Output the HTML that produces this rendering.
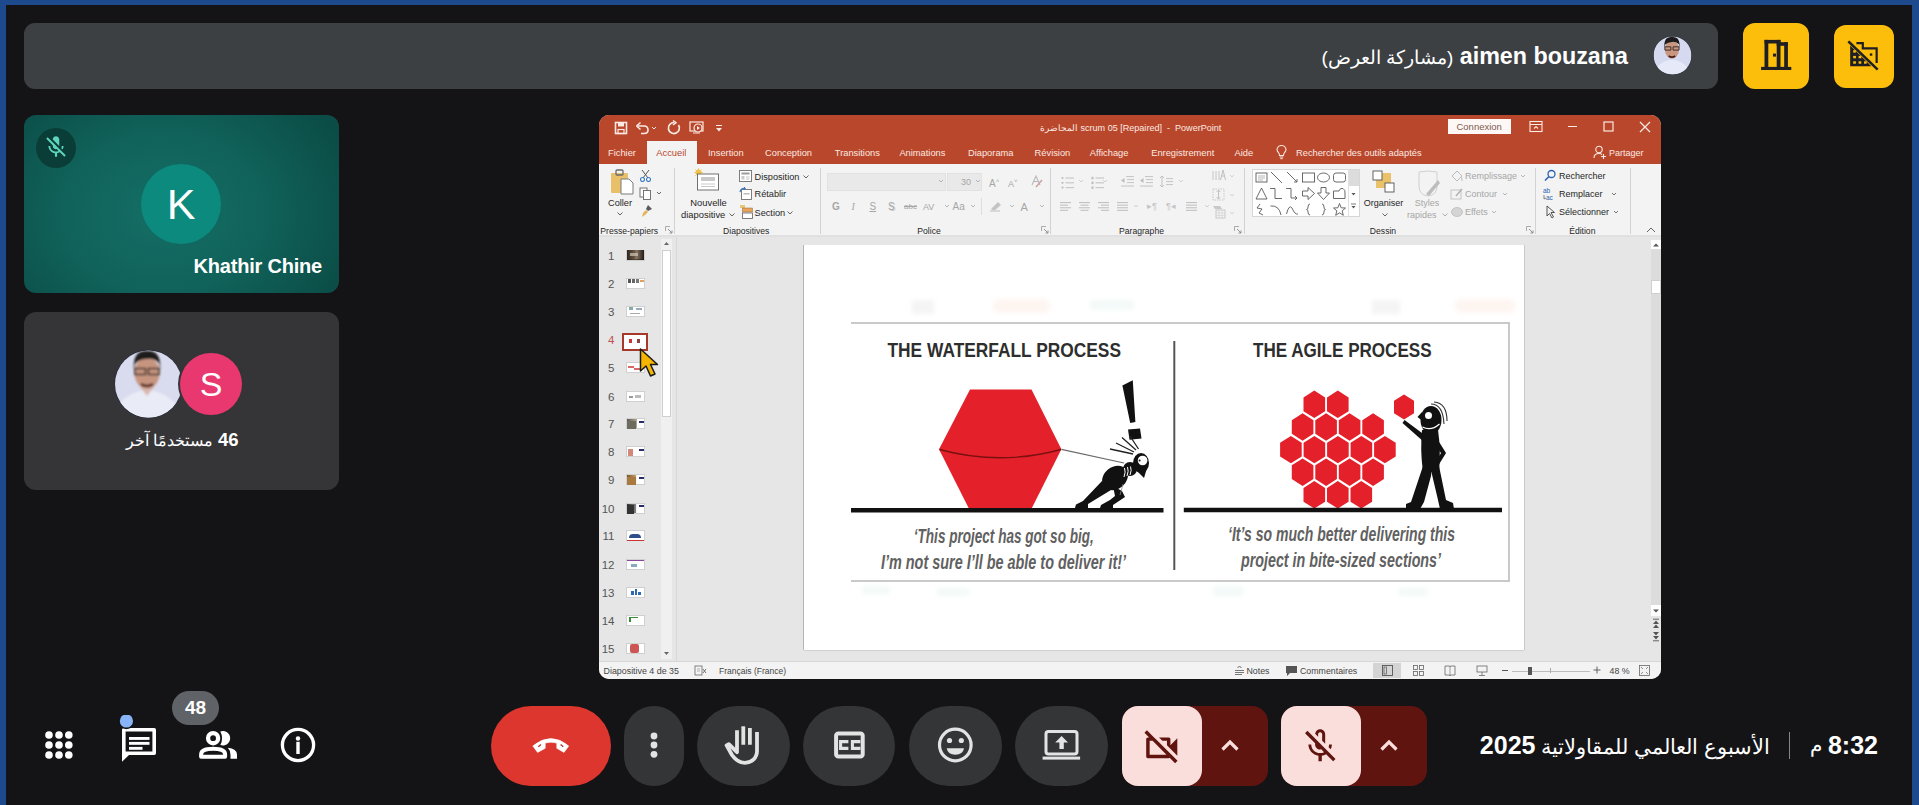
<!DOCTYPE html>
<html><head><meta charset="utf-8">
<style>
*{margin:0;padding:0;box-sizing:border-box}
html,body{width:1919px;height:805px;overflow:hidden;background:#141416;font-family:"Liberation Sans",sans-serif}
.a{position:absolute}
#frameT{left:0;top:0;width:1919px;height:5px;background:#1d4a8d}
#frameL{left:0;top:0;width:6px;height:805px;background:#1d4a8d}
#frameR{left:1912px;top:0;width:7px;height:805px;background:#1d4a8d}
#topbar{left:24px;top:23px;width:1694px;height:66px;background:#3c4043;border-radius:11px}
.yb{background:#fcbd0b;border-radius:12px}
#tile1{left:24px;top:115px;width:315px;height:178px;border-radius:12px;background:radial-gradient(ellipse 64% 90% at 44% 55%,#146e65 0%,#10625a 50%,#0b4c46 100%)}
#tile2{left:24px;top:312px;width:315px;height:178px;border-radius:12px;background:#353537}
.cb{background:#333537;border-radius:40px}
#ppt{left:599px;top:115px;width:1062px;height:564px;border-radius:10px;overflow:hidden;background:#e6e6e6}
.t{white-space:nowrap}
#ppt svg text{white-space:pre}
</style></head><body>
<div class="a" id="frameT"></div><div class="a" id="frameL"></div><div class="a" id="frameR"></div>

<!-- top bar -->
<div class="a" id="topbar"></div>
<div class="a yb" style="left:1743px;top:23px;width:66px;height:66px"></div>
<div class="a yb" style="left:1834px;top:25px;width:60px;height:63px"></div>

<!-- tiles -->
<div class="a" id="tile1"></div>
<div class="a" id="tile2"></div>

<!-- ppt -->
<div class="a" id="ppt">
<div class="a" style="left:0.0px;top:0.0px;width:1062.0px;height:49.0px;background:#b9472b"></div>
<svg class="a" style="left:15.0px;top:6.0px" width="14" height="14" viewBox="0 0 14 14"><rect x="1.5" y="1.5" width="11" height="11" fill="none" stroke="#fbe9e3" stroke-width="1.6"/><rect x="4" y="1.5" width="6" height="4" fill="#fbe9e3"/><rect x="4" y="8.5" width="6" height="4" fill="none" stroke="#fbe9e3" stroke-width="1.2"/></svg>
<svg class="a" style="left:36.0px;top:5.0px" width="24" height="16" viewBox="0 0 24 16"><path d="M3 6 H9 Q13 6 13 10 Q13 13.5 9 13.5 H6" fill="none" stroke="#fbe9e3" stroke-width="1.6"/><path d="M1.5 6 L5.5 2.5 M1.5 6 L5.5 9.5" stroke="#fbe9e3" stroke-width="1.6"/><path d="M17 7 L19 9 L21 7" fill="none" stroke="#fbe9e3" stroke-width="1"/></svg>
<svg class="a" style="left:67.0px;top:5.0px" width="16" height="16" viewBox="0 0 16 16"><path d="M12.5 5 A5.5 5.5 0 1 1 8 2.5" fill="none" stroke="#fbe9e3" stroke-width="1.7"/><path d="M7 0.5 L10 2.7 L7 5" fill="none" stroke="#fbe9e3" stroke-width="1.5"/></svg>
<svg class="a" style="left:90.0px;top:5.0px" width="16" height="16" viewBox="0 0 16 16"><rect x="1" y="2" width="13" height="9" fill="none" stroke="#fbe9e3" stroke-width="1.2"/><circle cx="9" cy="8" r="4" fill="#b9472b" stroke="#fbe9e3" stroke-width="1.2"/><path d="M8 6 L11 8 L8 10Z" fill="#fbe9e3"/><path d="M4 13 H11" stroke="#fbe9e3" stroke-width="1"/></svg>
<svg class="a" style="left:115.0px;top:8.0px" width="10" height="10" viewBox="0 0 10 10"><path d="M2 2.5 H8" stroke="#fbe9e3" stroke-width="1"/><path d="M2 5 L5 8.5 L8 5Z" fill="#fbe9e3"/></svg>
<div class="a t" style="left:441.0px;top:8.8px;font-size:9.05px;line-height:9.05px;color:#fbe9e3;">المحاضرة scrum 05 [Repaired]&nbsp; -&nbsp; PowerPoint</div>
<div class="a" style="left:849.0px;top:3.8px;width:62.5px;height:15.4px;background:#fdf7f5"></div>
<div class="a t" style="left:730.2px;width:300px;text-align:center;top:7.1px;font-size:9.5px;line-height:9.5px;color:#7d5b50;">Connexion</div>
<svg class="a" style="left:930.0px;top:5.0px" width="14" height="13" viewBox="0 0 14 13"><rect x="1" y="1.5" width="12" height="10" fill="none" stroke="#fbe9e3" stroke-width="1.1"/><path d="M1 4.5 H13" stroke="#fbe9e3" stroke-width="1.1"/><path d="M5 8.5 L7 6.5 L9 8.5" fill="none" stroke="#fbe9e3" stroke-width="1.1"/></svg>
<div class="a" style="left:968.5px;top:11.0px;width:9.0px;height:1.2px;background:#fbe9e3"></div>
<svg class="a" style="left:1004.0px;top:6.0px" width="11" height="11" viewBox="0 0 11 11"><rect x="1" y="1" width="9" height="9" fill="none" stroke="#fbe9e3" stroke-width="1.2"/></svg>
<svg class="a" style="left:1039.5px;top:5.5px" width="12" height="12" viewBox="0 0 12 12"><path d="M1 1 L11 11 M11 1 L1 11" stroke="#fbe9e3" stroke-width="1.3"/></svg>
<div class="a" style="left:48.0px;top:26.0px;width:50.0px;height:24.0px;background:#f3f3f3"></div>
<div class="a t" style="left:9.0px;top:33.7px;font-size:9.3px;line-height:9.3px;color:#fbe9e3;">Fichier</div>
<div class="a t" style="left:57.3px;top:33.7px;font-size:9.3px;line-height:9.3px;color:#b9472b;">Accueil</div>
<div class="a t" style="left:109.0px;top:33.7px;font-size:9.3px;line-height:9.3px;color:#fbe9e3;">Insertion</div>
<div class="a t" style="left:166.0px;top:33.7px;font-size:9.3px;line-height:9.3px;color:#fbe9e3;">Conception</div>
<div class="a t" style="left:235.8px;top:33.7px;font-size:9.3px;line-height:9.3px;color:#fbe9e3;">Transitions</div>
<div class="a t" style="left:300.4px;top:33.7px;font-size:9.3px;line-height:9.3px;color:#fbe9e3;">Animations</div>
<div class="a t" style="left:369.0px;top:33.7px;font-size:9.3px;line-height:9.3px;color:#fbe9e3;">Diaporama</div>
<div class="a t" style="left:435.6px;top:33.7px;font-size:9.3px;line-height:9.3px;color:#fbe9e3;">Révision</div>
<div class="a t" style="left:490.8px;top:33.7px;font-size:9.3px;line-height:9.3px;color:#fbe9e3;">Affichage</div>
<div class="a t" style="left:552.2px;top:33.7px;font-size:9.3px;line-height:9.3px;color:#fbe9e3;">Enregistrement</div>
<div class="a t" style="left:635.5px;top:33.7px;font-size:9.3px;line-height:9.3px;color:#fbe9e3;">Aide</div>
<div class="a t" style="left:697.0px;top:33.7px;font-size:9.3px;line-height:9.3px;color:#fbe9e3;">Rechercher des outils adaptés</div>
<svg class="a" style="left:677.0px;top:29.0px" width="11" height="16" viewBox="0 0 11 16"><path d="M5.5 1.5 A4 4 0 0 1 8.5 8.5 Q7.5 10 7.5 11.5 H3.5 Q3.5 10 2.5 8.5 A4 4 0 0 1 5.5 1.5Z" fill="none" stroke="#fbe9e3" stroke-width="1.1"/><path d="M3.7 13 H7.3 M4.3 14.7 H6.7" stroke="#fbe9e3" stroke-width="1"/></svg>
<svg class="a" style="left:994.0px;top:30.0px" width="14" height="14" viewBox="0 0 14 14"><circle cx="6" cy="4.5" r="3.2" fill="none" stroke="#fbe9e3" stroke-width="1.1"/><path d="M1 13 Q1 8.5 6 8.5 Q8 8.5 9 9.5" fill="none" stroke="#fbe9e3" stroke-width="1.1"/><path d="M10.5 9 V14 M8 11.5 H13" stroke="#fbe9e3" stroke-width="1.1"/></svg>
<div class="a t" style="left:1010.0px;top:33.8px;font-size:9px;line-height:9px;color:#fbe9e3;">Partager</div>
<div class="a" style="left:0.0px;top:49.0px;width:1062.0px;height:72.0px;background:#f3f3f3"></div>
<div class="a" style="left:0.0px;top:120.0px;width:1062.0px;height:2.0px;background:#e0e0e0"></div>
<div class="a" style="left:74.6px;top:53.0px;width:1.0px;height:66.0px;background:#d2d2d2"></div>
<div class="a" style="left:221.0px;top:53.0px;width:1.0px;height:66.0px;background:#d2d2d2"></div>
<div class="a" style="left:450.8px;top:53.0px;width:1.0px;height:66.0px;background:#d2d2d2"></div>
<div class="a" style="left:644.8px;top:53.0px;width:1.0px;height:66.0px;background:#d2d2d2"></div>
<div class="a" style="left:936.2px;top:53.0px;width:1.0px;height:66.0px;background:#d2d2d2"></div>
<div class="a" style="left:1030.8px;top:53.0px;width:1.0px;height:66.0px;background:#d2d2d2"></div>
<div class="a t" style="left:-119.8px;width:300px;text-align:center;top:111.8px;font-size:8.6px;line-height:8.6px;color:#262626;">Presse-papiers</div>
<div class="a t" style="left:-2.8px;width:300px;text-align:center;top:111.8px;font-size:8.6px;line-height:8.6px;color:#262626;">Diapositives</div>
<div class="a t" style="left:180.0px;width:300px;text-align:center;top:111.8px;font-size:8.6px;line-height:8.6px;color:#262626;">Police</div>
<div class="a t" style="left:392.5px;width:300px;text-align:center;top:111.8px;font-size:8.6px;line-height:8.6px;color:#262626;">Paragraphe</div>
<div class="a t" style="left:634.0px;width:300px;text-align:center;top:111.8px;font-size:8.6px;line-height:8.6px;color:#262626;">Dessin</div>
<div class="a t" style="left:833.3px;width:300px;text-align:center;top:111.8px;font-size:8.6px;line-height:8.6px;color:#262626;">Édition</div>
<svg class="a" style="left:66.0px;top:111.0px" width="8" height="8" viewBox="0 0 8 8"><path d="M0.5 0.5 H5 M0.5 0.5 V5" stroke="#999" stroke-width="0.8" fill="none"/><path d="M3 3 L7 7 M7 4.5 V7 H4.5" stroke="#888" stroke-width="0.9" fill="none"/></svg>
<svg class="a" style="left:442.0px;top:111.0px" width="8" height="8" viewBox="0 0 8 8"><path d="M0.5 0.5 H5 M0.5 0.5 V5" stroke="#999" stroke-width="0.8" fill="none"/><path d="M3 3 L7 7 M7 4.5 V7 H4.5" stroke="#888" stroke-width="0.9" fill="none"/></svg>
<svg class="a" style="left:635.0px;top:111.0px" width="8" height="8" viewBox="0 0 8 8"><path d="M0.5 0.5 H5 M0.5 0.5 V5" stroke="#999" stroke-width="0.8" fill="none"/><path d="M3 3 L7 7 M7 4.5 V7 H4.5" stroke="#888" stroke-width="0.9" fill="none"/></svg>
<svg class="a" style="left:927.0px;top:111.0px" width="8" height="8" viewBox="0 0 8 8"><path d="M0.5 0.5 H5 M0.5 0.5 V5" stroke="#999" stroke-width="0.8" fill="none"/><path d="M3 3 L7 7 M7 4.5 V7 H4.5" stroke="#888" stroke-width="0.9" fill="none"/></svg>
<svg class="a" style="left:10.0px;top:53.0px" width="26" height="28" viewBox="0 0 26 28"><rect x="2" y="5" width="17" height="20" rx="1" fill="#e8c06a"/><rect x="7" y="2" width="7" height="5" rx="1" fill="none" stroke="#6b6b6b" stroke-width="1.3"/><path d="M12 11 H20 L24 15 V26 H12Z" fill="#fff" stroke="#7a7a7a" stroke-width="1"/></svg>
<div class="a t" style="left:9.0px;top:83.8px;font-size:9.2px;line-height:9.2px;color:#262626;">Coller</div>
<svg class="a" style="left:17.0px;top:96.0px" width="8" height="6" viewBox="0 0 8 6"><path d="M1.5 1.5 L4 4 L6.5 1.5" fill="none" stroke="#555" stroke-width="0.9"/></svg>
<svg class="a" style="left:40.0px;top:54.0px" width="13" height="13" viewBox="0 0 13 13"><path d="M3 1 L9 9 M10 1 L4 9" stroke="#555" stroke-width="1"/><circle cx="3.5" cy="10.5" r="2" fill="none" stroke="#3a78c2" stroke-width="1.1"/><circle cx="9.5" cy="10.5" r="2" fill="none" stroke="#3a78c2" stroke-width="1.1"/></svg>
<svg class="a" style="left:40.0px;top:72.0px" width="24" height="13" viewBox="0 0 24 13"><rect x="1" y="1" width="7" height="9" fill="#fff" stroke="#666" stroke-width="0.9"/><rect x="4.5" y="3.5" width="7" height="9" fill="#fff" stroke="#666" stroke-width="0.9"/><path d="M18 5 L20 7 L22 5" fill="none" stroke="#555" stroke-width="0.9"/></svg>
<svg class="a" style="left:41.0px;top:89.0px" width="13" height="14" viewBox="0 0 13 14"><path d="M8 1 L12 5 L8 7 L6 5Z" fill="#5a5a5a"/><path d="M2 13 L3 9 L6 6 L8 8 L5 11Z" fill="#e2b55a"/></svg>
<svg class="a" style="left:95.0px;top:53.0px" width="28" height="24" viewBox="0 0 28 24"><circle cx="4.5" cy="4.5" r="3" fill="#f0c24a"/><path d="M4.5 0 V9 M0 4.5 H9 M1.3 1.3 L7.7 7.7 M7.7 1.3 L1.3 7.7" stroke="#f0c24a" stroke-width="0.8"/><rect x="3.5" y="6" width="21" height="16" fill="#fff" stroke="#707070" stroke-width="1"/><rect x="7" y="9" width="14" height="4" fill="#c8c8c8"/><path d="M7 16 H21 M7 18.5 H21" stroke="#bbb" stroke-width="0.8"/></svg>
<div class="a t" style="left:-40.5px;width:300px;text-align:center;top:82.5px;font-size:9.4px;line-height:9.4px;color:#262626;">Nouvelle</div>
<div class="a t" style="left:82.0px;top:95.3px;font-size:9.4px;line-height:9.4px;color:#262626;">diapositive</div>
<svg class="a" style="left:129.0px;top:97.0px" width="8" height="6" viewBox="0 0 8 6"><path d="M1.5 1.5 L4 4 L6.5 1.5" fill="none" stroke="#555" stroke-width="0.9"/></svg>
<svg class="a" style="left:140.0px;top:55.0px" width="13" height="12" viewBox="0 0 13 12"><rect x="0.5" y="0.5" width="12" height="11" fill="#fff" stroke="#707070" stroke-width="0.9"/><rect x="2.5" y="2.5" width="8" height="2" fill="#9c9c9c"/><rect x="2.5" y="6" width="3" height="3.5" fill="#c9c9c9"/><path d="M7 7 H10.5 M7 9 H10.5" stroke="#aaa" stroke-width="0.7"/></svg>
<div class="a t" style="left:155.5px;top:57.6px;font-size:9.2px;line-height:9.2px;color:#262626;">Disposition</div>
<svg class="a" style="left:203.0px;top:59.0px" width="8" height="6" viewBox="0 0 8 6"><path d="M1.5 1.5 L4 4 L6.5 1.5" fill="none" stroke="#555" stroke-width="0.9"/></svg>
<svg class="a" style="left:140.0px;top:72.0px" width="13" height="13" viewBox="0 0 13 13"><rect x="2.5" y="2.5" width="10" height="10" fill="#fff" stroke="#707070" stroke-width="0.9"/><path d="M1 5 Q2 1 6 1.5" fill="none" stroke="#3a78c2" stroke-width="1.2"/><path d="M5 0 L6.5 1.5 L5 3" fill="none" stroke="#3a78c2" stroke-width="1"/><rect x="4.5" y="6" width="6" height="1.5" fill="#bbb"/></svg>
<div class="a t" style="left:155.5px;top:75.2px;font-size:9.2px;line-height:9.2px;color:#262626;">Rétablir</div>
<svg class="a" style="left:141.0px;top:90.0px" width="13" height="14" viewBox="0 0 13 14"><rect x="0" y="0" width="5" height="3" fill="#e9c77a"/><rect x="2.5" y="3" width="10" height="4" fill="#e9a35a" stroke="#8a6a40" stroke-width="0.5"/><rect x="2.5" y="8" width="10" height="5.5" fill="#fff" stroke="#707070" stroke-width="0.9"/></svg>
<div class="a t" style="left:155.5px;top:93.5px;font-size:9.2px;line-height:9.2px;color:#262626;">Section</div>
<svg class="a" style="left:187.0px;top:95.0px" width="8" height="6" viewBox="0 0 8 6"><path d="M1.5 1.5 L4 4 L6.5 1.5" fill="none" stroke="#555" stroke-width="0.9"/></svg>
<div class="a" style="left:228.0px;top:57.7px;width:118.7px;height:18.7px;background:#e9e9e9;border:1px solid #e2e2e2"></div>
<div class="a" style="left:347.8px;top:57.7px;width:35.7px;height:18.7px;background:#e9e9e9;border:1px solid #e2e2e2"></div>
<div class="a t" style="left:362.0px;top:63.3px;font-size:9px;line-height:9px;color:#a6a6a6;">30</div>
<svg class="a" style="left:339.0px;top:64.0px" width="6" height="5" viewBox="0 0 6 5"><path d="M1 1 L3 3 L5 1" fill="none" stroke="#a6a6a6" stroke-width="0.8"/></svg>
<svg class="a" style="left:376.0px;top:64.0px" width="6" height="5" viewBox="0 0 6 5"><path d="M1 1 L3 3 L5 1" fill="none" stroke="#a6a6a6" stroke-width="0.8"/></svg>
<div class="a t" style="left:390.0px;top:61.3px;font-size:10px;line-height:10px;color:#a6a6a6;">A<sup style="font-size:6px">˄</sup></div>
<div class="a t" style="left:409.0px;top:62.3px;font-size:9px;line-height:9px;color:#a6a6a6;">A<sup style="font-size:6px">˅</sup></div>
<svg class="a" style="left:431.0px;top:59.0px" width="13" height="14" viewBox="0 0 13 14"><path d="M2 11 L6 2 L10 11 M3.5 7.5 H8.5" fill="none" stroke="#b8b8b8" stroke-width="1.1"/><path d="M6 13 L12 6" stroke="#c9a0a0" stroke-width="1.4"/></svg>
<div class="a t" style="left:233.0px;top:86.8px;font-size:10px;line-height:10px;color:#a6a6a6;font-weight:bold">G</div>
<div class="a t" style="left:252.5px;top:86.8px;font-size:10px;line-height:10px;color:#a6a6a6;font-style:italic;font-family:Liberation Serif">I</div>
<div class="a t" style="left:270.5px;top:86.8px;font-size:10px;line-height:10px;color:#a6a6a6;text-decoration:underline">S</div>
<div class="a t" style="left:289.0px;top:86.8px;font-size:10px;line-height:10px;color:#a6a6a6;text-shadow:1px 1px 0 #ccc">S</div>
<div class="a t" style="left:305.0px;top:86.8px;font-size:10px;line-height:10px;color:#a6a6a6;text-decoration:line-through;font-size:8px">abc</div>
<div class="a t" style="left:324.0px;top:86.8px;font-size:10px;line-height:10px;color:#a6a6a6;font-size:9px">AV</div>
<div class="a t" style="left:353.5px;top:86.8px;font-size:10px;line-height:10px;color:#a6a6a6;">Aa</div>
<div class="a t" style="left:421.5px;top:86.8px;font-size:10px;line-height:10px;color:#a6a6a6;font-size:11px">A</div>
<svg class="a" style="left:345.0px;top:89.0px" width="6" height="5" viewBox="0 0 6 5"><path d="M1 1 L3 3 L5 1" fill="none" stroke="#a6a6a6" stroke-width="0.8"/></svg>
<svg class="a" style="left:371.0px;top:89.0px" width="6" height="5" viewBox="0 0 6 5"><path d="M1 1 L3 3 L5 1" fill="none" stroke="#a6a6a6" stroke-width="0.8"/></svg>
<svg class="a" style="left:410.0px;top:89.0px" width="6" height="5" viewBox="0 0 6 5"><path d="M1 1 L3 3 L5 1" fill="none" stroke="#a6a6a6" stroke-width="0.8"/></svg>
<svg class="a" style="left:440.0px;top:89.0px" width="6" height="5" viewBox="0 0 6 5"><path d="M1 1 L3 3 L5 1" fill="none" stroke="#a6a6a6" stroke-width="0.8"/></svg>
<div class="a" style="left:382.0px;top:83.0px;width:1.0px;height:17.0px;background:#ddd"></div>
<svg class="a" style="left:389.0px;top:84.0px" width="16" height="13" viewBox="0 0 16 13"><path d="M3 10 L10 3 L13 6 L6 12Z" fill="#c4c4c4"/><path d="M2 12 H12" stroke="#d8d8d8" stroke-width="2"/></svg>
<svg class="a" style="left:461.5px;top:61.0px" width="14" height="14" viewBox="0 0 14 14"><circle cx="1.5" cy="2.0" r="1.1" fill="#bdbdbd"/><rect x="4.5" y="1.4" width="8.5" height="1.2" fill="#c8c8c8"/><circle cx="1.5" cy="6.8" r="1.1" fill="#bdbdbd"/><rect x="4.5" y="6.199999999999999" width="8.5" height="1.2" fill="#c8c8c8"/><circle cx="1.5" cy="11.6" r="1.1" fill="#bdbdbd"/><rect x="4.5" y="11.0" width="8.5" height="1.2" fill="#c8c8c8"/></svg>
<svg class="a" style="left:491.5px;top:61.0px" width="14" height="14" viewBox="0 0 14 14"><rect x="0.5" y="0.8" width="2" height="2.5" fill="#bdbdbd"/><rect x="4.5" y="1.4" width="8.5" height="1.2" fill="#c8c8c8"/><rect x="0.5" y="5.6" width="2" height="2.5" fill="#bdbdbd"/><rect x="4.5" y="6.199999999999999" width="8.5" height="1.2" fill="#c8c8c8"/><rect x="0.5" y="10.4" width="2" height="2.5" fill="#bdbdbd"/><rect x="4.5" y="11.0" width="8.5" height="1.2" fill="#c8c8c8"/></svg>
<svg class="a" style="left:521.5px;top:61.0px" width="14" height="14" viewBox="0 0 14 14"><rect x="5" y="0" width="8" height="1.1" fill="#c8c8c8"/><rect x="6" y="3" width="7" height="1.1" fill="#c8c8c8"/><rect x="6" y="6" width="7" height="1.1" fill="#c8c8c8"/><rect x="0" y="9.5" width="13" height="1.1" fill="#c8c8c8"/><path d="M0 4.5 L3.5 2 V7Z" fill="#bdbdbd"/></svg>
<svg class="a" style="left:541.0px;top:61.0px" width="14" height="14" viewBox="0 0 14 14"><rect x="5" y="0" width="8" height="1.1" fill="#c8c8c8"/><rect x="6" y="3" width="7" height="1.1" fill="#c8c8c8"/><rect x="6" y="6" width="7" height="1.1" fill="#c8c8c8"/><rect x="0" y="9.5" width="13" height="1.1" fill="#c8c8c8"/><path d="M0 4.5 L3.5 2 V7Z" fill="#bdbdbd"/></svg>
<svg class="a" style="left:561.0px;top:61.0px" width="14" height="14" viewBox="0 0 14 14"><path d="M2 0 V11 M0 2 L2 0 L4 2 M0 9 L2 11 L4 9" stroke="#bdbdbd" stroke-width="0.9" fill="none"/><rect x="6" y="2" width="7" height="1.1" fill="#c8c8c8"/><rect x="6" y="5" width="7" height="1.1" fill="#c8c8c8"/><rect x="6" y="8" width="7" height="1.1" fill="#c8c8c8"/></svg>
<svg class="a" style="left:460.5px;top:87.0px" width="14" height="14" viewBox="0 0 14 14"><rect x="0" y="0.0" width="11" height="1.1" fill="#c2c2c2"/><rect x="0" y="2.6" width="8" height="1.1" fill="#c2c2c2"/><rect x="0" y="5.2" width="11" height="1.1" fill="#c2c2c2"/><rect x="0" y="7.800000000000001" width="8" height="1.1" fill="#c2c2c2"/></svg>
<svg class="a" style="left:479.5px;top:87.0px" width="14" height="14" viewBox="0 0 14 14"><rect x="0.0" y="0.0" width="11" height="1.1" fill="#c2c2c2"/><rect x="1.5" y="2.6" width="8" height="1.1" fill="#c2c2c2"/><rect x="0.0" y="5.2" width="11" height="1.1" fill="#c2c2c2"/><rect x="1.5" y="7.800000000000001" width="8" height="1.1" fill="#c2c2c2"/></svg>
<svg class="a" style="left:498.5px;top:87.0px" width="14" height="14" viewBox="0 0 14 14"><rect x="0" y="0.0" width="11" height="1.1" fill="#c2c2c2"/><rect x="3" y="2.6" width="8" height="1.1" fill="#c2c2c2"/><rect x="0" y="5.2" width="11" height="1.1" fill="#c2c2c2"/><rect x="3" y="7.800000000000001" width="8" height="1.1" fill="#c2c2c2"/></svg>
<svg class="a" style="left:517.5px;top:87.0px" width="14" height="14" viewBox="0 0 14 14"><rect x="0" y="0.0" width="11" height="1.1" fill="#c2c2c2"/><rect x="0" y="2.6" width="11" height="1.1" fill="#c2c2c2"/><rect x="0" y="5.2" width="11" height="1.1" fill="#c2c2c2"/><rect x="0" y="7.800000000000001" width="11" height="1.1" fill="#c2c2c2"/></svg>
<svg class="a" style="left:479.0px;top:64.0px" width="6" height="5" viewBox="0 0 6 5"><path d="M1 1 L3 3 L5 1" fill="none" stroke="#c8c8c8" stroke-width="0.8"/></svg>
<svg class="a" style="left:503.0px;top:64.0px" width="6" height="5" viewBox="0 0 6 5"><path d="M1 1 L3 3 L5 1" fill="none" stroke="#c8c8c8" stroke-width="0.8"/></svg>
<svg class="a" style="left:579.0px;top:64.0px" width="6" height="5" viewBox="0 0 6 5"><path d="M1 1 L3 3 L5 1" fill="none" stroke="#c8c8c8" stroke-width="0.8"/></svg>
<svg class="a" style="left:534.0px;top:89.0px" width="6" height="5" viewBox="0 0 6 5"><path d="M1 1 L3 3 L5 1" fill="none" stroke="#c8c8c8" stroke-width="0.8"/></svg>
<svg class="a" style="left:605.0px;top:89.0px" width="6" height="5" viewBox="0 0 6 5"><path d="M1 1 L3 3 L5 1" fill="none" stroke="#c8c8c8" stroke-width="0.8"/></svg>
<div class="a t" style="left:548.0px;top:87.3px;font-size:9px;line-height:9px;color:#c4c4c4;">▸¶</div>
<div class="a t" style="left:567.0px;top:87.3px;font-size:9px;line-height:9px;color:#c4c4c4;">¶◂</div>
<svg class="a" style="left:587.0px;top:87.0px" width="14" height="14" viewBox="0 0 14 14"><rect x="0" y="0.0" width="11" height="1.1" fill="#c2c2c2"/><rect x="0" y="2.6" width="11" height="1.1" fill="#c2c2c2"/><rect x="0" y="5.2" width="11" height="1.1" fill="#c2c2c2"/><rect x="0" y="7.800000000000001" width="11" height="1.1" fill="#c2c2c2"/></svg>
<svg class="a" style="left:613.0px;top:53.0px" width="14" height="14" viewBox="0 0 14 14"><path d="M1 3 V12 M4 3 V12 M7 3 V12" stroke="#c6c6c6" stroke-width="1"/><path d="M8.5 12 L11 2 L13.5 12 M9.5 8 H12.5" stroke="#bdbdbd" stroke-width="1" fill="none"/></svg>
<svg class="a" style="left:613.0px;top:72.0px" width="14" height="14" viewBox="0 0 14 14"><rect x="1" y="2" width="11" height="11" fill="none" stroke="#c6c6c6" stroke-width="0.9" stroke-dasharray="1.5 1"/><path d="M6.5 3 V12 M4.5 5 L6.5 3 L8.5 5 M4.5 10 L6.5 12 L8.5 10" stroke="#bdbdbd" stroke-width="0.9" fill="none"/></svg>
<svg class="a" style="left:613.0px;top:90.0px" width="14" height="14" viewBox="0 0 14 14"><rect x="4" y="5" width="9" height="8" fill="none" stroke="#c6c6c6" stroke-width="0.9"/><path d="M4 8 H13 M4 10.5 H13 M7 5 V13 M10 5 V13" stroke="#d0d0d0" stroke-width="0.6"/><path d="M1 1 H8 L10 4 H3Z" fill="#c8c8c8"/></svg>
<svg class="a" style="left:630.0px;top:59.0px" width="6" height="5" viewBox="0 0 6 5"><path d="M1 1 L3 3 L5 1" fill="none" stroke="#c8c8c8" stroke-width="0.8"/></svg>
<svg class="a" style="left:630.0px;top:78.0px" width="6" height="5" viewBox="0 0 6 5"><path d="M1 1 L3 3 L5 1" fill="none" stroke="#c8c8c8" stroke-width="0.8"/></svg>
<svg class="a" style="left:630.0px;top:96.0px" width="6" height="5" viewBox="0 0 6 5"><path d="M1 1 L3 3 L5 1" fill="none" stroke="#c8c8c8" stroke-width="0.8"/></svg>
<div class="a" style="left:653.3px;top:54.2px;width:107.3px;height:48.1px;background:#fff;border:1px solid #d6d6d6"></div>
<div class="a" style="left:749.4px;top:55.2px;width:10.2px;height:16.0px;background:#dcdcdc"></div>
<div class="a" style="left:749.4px;top:54.2px;width:1.0px;height:48.0px;background:#e0e0e0"></div>
<svg class="a" style="left:655.5px;top:56.2px" width="13" height="13" viewBox="0 0 13 13"><rect x="1" y="2" width="11" height="9" fill="none" stroke="#5a5a5a" stroke-width="0.9"/><path d="M3 5 H10 M3 7 H10 M3 9 H8" stroke="#888" stroke-width="0.6"/></svg>
<svg class="a" style="left:671.3px;top:56.2px" width="13" height="13" viewBox="0 0 13 13"><path d="M1 1 L12 12" stroke="#5a5a5a" stroke-width="0.9"/></svg>
<svg class="a" style="left:686.9px;top:56.2px" width="13" height="13" viewBox="0 0 13 13"><path d="M1 1 L11 11 M8 11 H11 V8" stroke="#5a5a5a" stroke-width="0.9" fill="none"/></svg>
<svg class="a" style="left:702.5px;top:56.2px" width="13" height="13" viewBox="0 0 13 13"><rect x="0.5" y="2" width="12" height="9" fill="none" stroke="#5a5a5a" stroke-width="0.9"/></svg>
<svg class="a" style="left:717.8px;top:56.2px" width="13" height="13" viewBox="0 0 13 13"><ellipse cx="6.5" cy="6.5" rx="6" ry="4.5" fill="none" stroke="#5a5a5a" stroke-width="0.9"/></svg>
<svg class="a" style="left:733.8px;top:56.2px" width="13" height="13" viewBox="0 0 13 13"><rect x="0.5" y="2" width="12" height="9" rx="2.5" fill="none" stroke="#5a5a5a" stroke-width="0.9"/></svg>
<svg class="a" style="left:655.5px;top:71.8px" width="13" height="13" viewBox="0 0 13 13"><path d="M6.5 1 L12 12 H1Z" fill="none" stroke="#5a5a5a" stroke-width="0.9"/></svg>
<svg class="a" style="left:671.3px;top:71.8px" width="13" height="13" viewBox="0 0 13 13"><path d="M0 1.5 H5 V11.5 H12" fill="none" stroke="#5a5a5a" stroke-width="0.9"/></svg>
<svg class="a" style="left:686.9px;top:71.8px" width="13" height="13" viewBox="0 0 13 13"><path d="M0 1.5 H5 V11 H11 M9 9 L11 11 L9 13" fill="none" stroke="#5a5a5a" stroke-width="0.9"/></svg>
<svg class="a" style="left:702.5px;top:71.8px" width="13" height="13" viewBox="0 0 13 13"><path d="M0.5 4 H6 V0.5 L12.5 6.5 L6 12.5 V9 H0.5Z" fill="none" stroke="#5a5a5a" stroke-width="0.9"/></svg>
<svg class="a" style="left:717.8px;top:71.8px" width="13" height="13" viewBox="0 0 13 13"><path d="M4 0.5 H9 V6 H12.5 L6.5 12.5 L0.5 6 H4Z" fill="none" stroke="#5a5a5a" stroke-width="0.9"/></svg>
<svg class="a" style="left:733.8px;top:71.8px" width="13" height="13" viewBox="0 0 13 13"><path d="M0.5 4 H6 Q7 0.5 10 1.5 Q12.5 3 12 6 V11.5 H0.5Z" fill="none" stroke="#5a5a5a" stroke-width="0.9"/></svg>
<svg class="a" style="left:655.5px;top:87.5px" width="13" height="13" viewBox="0 0 13 13"><path d="M5 1 L2 5 L7 6 L4 10 L8 12" fill="none" stroke="#5a5a5a" stroke-width="0.9"/></svg>
<svg class="a" style="left:671.3px;top:87.5px" width="13" height="13" viewBox="0 0 13 13"><path d="M0.5 3 Q9 2 11 12" fill="none" stroke="#5a5a5a" stroke-width="0.9"/></svg>
<svg class="a" style="left:686.9px;top:87.5px" width="13" height="13" viewBox="0 0 13 13"><path d="M0.5 11 Q3 1 6 5 Q9 12 12 11" fill="none" stroke="#5a5a5a" stroke-width="0.9"/></svg>
<svg class="a" style="left:702.5px;top:87.5px" width="13" height="13" viewBox="0 0 13 13"><path d="M8 1 Q6 1 6 4 Q6 6.5 4.5 6.5 Q6 6.5 6 9 Q6 12 8 12" fill="none" stroke="#5a5a5a" stroke-width="0.9"/></svg>
<svg class="a" style="left:717.8px;top:87.5px" width="13" height="13" viewBox="0 0 13 13"><path d="M5 1 Q7 1 7 4 Q7 6.5 8.5 6.5 Q7 6.5 7 9 Q7 12 5 12" fill="none" stroke="#5a5a5a" stroke-width="0.9"/></svg>
<svg class="a" style="left:733.8px;top:87.5px" width="13" height="13" viewBox="0 0 13 13"><path d="M6.5 0.5 L8.2 4.8 L12.5 5 L9.2 7.8 L10.3 12.3 L6.5 9.8 L2.7 12.3 L3.8 7.8 L0.5 5 L4.8 4.8Z" fill="none" stroke="#5a5a5a" stroke-width="0.9"/></svg>
<svg class="a" style="left:750.0px;top:74.0px" width="9" height="27" viewBox="0 0 9 27"><path d="M2.5 4 L4.5 6.5 L6.5 4Z" fill="#555"/><path d="M2 15 H7" stroke="#555" stroke-width="0.8"/><path d="M2.5 17 L4.5 19.5 L6.5 17Z" fill="#555"/></svg>
<svg class="a" style="left:773.0px;top:55.0px" width="24" height="24" viewBox="0 0 24 24"><rect x="4" y="3" width="15" height="15" fill="#e9c26a"/><rect x="1" y="1" width="9" height="9" fill="#fff" stroke="#555" stroke-width="0.9"/><rect x="13" y="13" width="9" height="9" fill="#fff" stroke="#555" stroke-width="0.9"/></svg>
<div class="a t" style="left:634.5px;width:300px;text-align:center;top:83.9px;font-size:9px;line-height:9px;color:#262626;">Organiser</div>
<svg class="a" style="left:782.0px;top:97.0px" width="8" height="6" viewBox="0 0 8 6"><path d="M1.5 1.5 L4 4 L6.5 1.5" fill="none" stroke="#555" stroke-width="0.9"/></svg>
<svg class="a" style="left:817.0px;top:55.0px" width="24" height="28" viewBox="0 0 24 28"><path d="M3 2 Q12 0 21 2 V16 Q21 25 12 26 Q3 25 3 16Z" fill="none" stroke="#d0d0d0" stroke-width="1"/><path d="M10 24 L22 10 L24 13 L13 26Z" fill="#bdbdbd"/></svg>
<div class="a t" style="left:678.0px;width:300px;text-align:center;top:83.9px;font-size:9px;line-height:9px;color:#a6a6a6;">Styles</div>
<div class="a t" style="left:808.0px;top:96.3px;font-size:9px;line-height:9px;color:#a6a6a6;">rapides</div>
<svg class="a" style="left:842.0px;top:97.0px" width="8" height="6" viewBox="0 0 8 6"><path d="M1.5 1.5 L4 4 L6.5 1.5" fill="none" stroke="#a6a6a6" stroke-width="0.9"/></svg>
<svg class="a" style="left:851.0px;top:54.0px" width="14" height="14" viewBox="0 0 14 14"><path d="M2 7 L7 2 L12 7 L7 12Z" fill="none" stroke="#bbb" stroke-width="1"/><path d="M11 8 Q13 11 11.5 12" stroke="#ccc" stroke-width="1.2" fill="none"/></svg>
<div class="a t" style="left:866.0px;top:57.3px;font-size:9px;line-height:9px;color:#a6a6a6;">Remplissage</div>
<svg class="a" style="left:851.0px;top:72.0px" width="14" height="14" viewBox="0 0 14 14"><rect x="1" y="3" width="10" height="9" fill="none" stroke="#c4c4c4" stroke-width="1"/><path d="M6 9 L12 2" stroke="#b0b0b0" stroke-width="1.4"/></svg>
<div class="a t" style="left:866.0px;top:75.1px;font-size:9px;line-height:9px;color:#a6a6a6;">Contour</div>
<svg class="a" style="left:851.0px;top:90.0px" width="14" height="14" viewBox="0 0 14 14"><ellipse cx="7" cy="7" rx="5.5" ry="4.5" fill="#d4d4d4" stroke="#bbb" stroke-width="0.8"/></svg>
<div class="a t" style="left:866.0px;top:93.0px;font-size:9px;line-height:9px;color:#a6a6a6;">Effets</div>
<svg class="a" style="left:921.0px;top:59.0px" width="6" height="5" viewBox="0 0 6 5"><path d="M1 1 L3 3 L5 1" fill="none" stroke="#a6a6a6" stroke-width="0.8"/></svg>
<svg class="a" style="left:903.0px;top:76.5px" width="6" height="5" viewBox="0 0 6 5"><path d="M1 1 L3 3 L5 1" fill="none" stroke="#a6a6a6" stroke-width="0.8"/></svg>
<svg class="a" style="left:892.0px;top:94.5px" width="6" height="5" viewBox="0 0 6 5"><path d="M1 1 L3 3 L5 1" fill="none" stroke="#a6a6a6" stroke-width="0.8"/></svg>
<svg class="a" style="left:945.0px;top:54.0px" width="13" height="13" viewBox="0 0 13 13"><circle cx="7.5" cy="5" r="3.5" fill="none" stroke="#2b62b0" stroke-width="1.3"/><path d="M5 7.5 L1 11.5" stroke="#2b62b0" stroke-width="1.6"/></svg>
<div class="a t" style="left:960.0px;top:57.3px;font-size:9px;line-height:9px;color:#262626;">Rechercher</div>
<svg class="a" style="left:944.0px;top:72.0px" width="14" height="14" viewBox="0 0 14 14"><text x="0" y="6" font-size="6.5" fill="#2b62b0" font-family="Liberation Sans">ab</text><text x="3" y="13" font-size="6.5" fill="#2b62b0" font-family="Liberation Sans">ac</text><path d="M1 8 L1 12 L3 11" stroke="#555" stroke-width="0.7" fill="none"/></svg>
<div class="a t" style="left:960.0px;top:75.3px;font-size:9px;line-height:9px;color:#262626;">Remplacer</div>
<svg class="a" style="left:1012.0px;top:77.0px" width="6" height="5" viewBox="0 0 6 5"><path d="M1 1 L3 3 L5 1" fill="none" stroke="#555" stroke-width="0.8"/></svg>
<svg class="a" style="left:946.0px;top:90.0px" width="12" height="14" viewBox="0 0 12 14"><path d="M2 1 V11 L4.5 8.5 L7 13 L8.5 12 L6 7.5 H9.5Z" fill="none" stroke="#444" stroke-width="0.9"/></svg>
<div class="a t" style="left:960.0px;top:93.0px;font-size:9px;line-height:9px;color:#262626;">Sélectionner</div>
<svg class="a" style="left:1014.0px;top:94.5px" width="6" height="5" viewBox="0 0 6 5"><path d="M1 1 L3 3 L5 1" fill="none" stroke="#555" stroke-width="0.8"/></svg>
<svg class="a" style="left:1047.0px;top:111.0px" width="10" height="8" viewBox="0 0 10 8"><path d="M1 6 L5 2 L9 6" fill="none" stroke="#555" stroke-width="0.9"/></svg>
<div class="a" style="left:0.0px;top:122.0px;width:1062.0px;height:425.0px;background:#e6e6e6"></div>
<div class="a" style="left:62.0px;top:124.0px;width:11.0px;height:420.0px;background:#f0f0f0"></div>
<div class="a" style="left:63.0px;top:135.0px;width:9.0px;height:167.0px;background:#fff;border:1px solid #cfcfcf"></div>
<svg class="a" style="left:63.0px;top:124.0px" width="9" height="9" viewBox="0 0 9 9"><path d="M2 6 L4.5 3 L7 6Z" fill="#666"/></svg>
<svg class="a" style="left:63.0px;top:534.0px" width="9" height="9" viewBox="0 0 9 9"><path d="M2 3 L4.5 6 L7 3Z" fill="#666"/></svg>
<div class="a" style="left:77.0px;top:122.0px;width:1.0px;height:425.0px;background:#d8d8d8"></div>
<div class="a t" style="right:1046.5px;top:136.0px;font-size:11.5px;line-height:11.5px;color:#555;">1</div>
<div class="a" style="left:27.0px;top:135.0px;width:19.0px;height:11.0px;background:linear-gradient(90deg,#2a2320,#5a4a3a 50%,#1f1a18);border:0.5px solid #d0d0d0"></div>
<div class="a t" style="right:1046.5px;top:163.6px;font-size:11.5px;line-height:11.5px;color:#555;">2</div>
<div class="a" style="left:27.0px;top:162.6px;width:19.0px;height:11.0px;background:#fff;border:0.5px solid #d0d0d0"></div>
<div class="a t" style="right:1046.5px;top:191.6px;font-size:11.5px;line-height:11.5px;color:#555;">3</div>
<div class="a" style="left:27.0px;top:190.6px;width:19.0px;height:11.0px;background:#fff;border:0.5px solid #d0d0d0"></div>
<div class="a t" style="right:1046.5px;top:219.5px;font-size:11.5px;line-height:11.5px;color:#c0504d;">4</div>
<div class="a" style="left:27.0px;top:218.5px;width:19.0px;height:11.0px;background:#fff;border:0.5px solid #d0d0d0"></div>
<div class="a t" style="right:1046.5px;top:248.0px;font-size:11.5px;line-height:11.5px;color:#555;">5</div>
<div class="a" style="left:27.0px;top:247.0px;width:19.0px;height:11.0px;background:#fff;border:0.5px solid #d0d0d0"></div>
<div class="a t" style="right:1046.5px;top:276.5px;font-size:11.5px;line-height:11.5px;color:#555;">6</div>
<div class="a" style="left:27.0px;top:275.5px;width:19.0px;height:11.0px;background:#fff;border:0.5px solid #d0d0d0"></div>
<div class="a t" style="right:1046.5px;top:304.0px;font-size:11.5px;line-height:11.5px;color:#555;">7</div>
<div class="a" style="left:27.0px;top:303.0px;width:19.0px;height:11.0px;background:linear-gradient(90deg,#5b5a55,#b6aa95 60%,#fff 61%);border:0.5px solid #d0d0d0"></div>
<div class="a t" style="right:1046.5px;top:332.0px;font-size:11.5px;line-height:11.5px;color:#555;">8</div>
<div class="a" style="left:27.0px;top:331.0px;width:19.0px;height:11.0px;background:#fff;border:0.5px solid #d0d0d0"></div>
<div class="a t" style="right:1046.5px;top:360.0px;font-size:11.5px;line-height:11.5px;color:#555;">9</div>
<div class="a" style="left:27.0px;top:359.0px;width:19.0px;height:11.0px;background:linear-gradient(90deg,#7a5530,#c9a46a 55%,#fff 56%);border:0.5px solid #d0d0d0"></div>
<div class="a t" style="right:1046.5px;top:389.0px;font-size:11.5px;line-height:11.5px;color:#555;">10</div>
<div class="a" style="left:27.0px;top:388.0px;width:19.0px;height:11.0px;background:linear-gradient(90deg,#333,#888 55%,#fff 56%);border:0.5px solid #d0d0d0"></div>
<div class="a t" style="right:1046.5px;top:416.0px;font-size:11.5px;line-height:11.5px;color:#555;">11</div>
<div class="a" style="left:27.0px;top:415.0px;width:19.0px;height:11.0px;background:#fff;border:0.5px solid #d0d0d0"></div>
<div class="a t" style="right:1046.5px;top:444.8px;font-size:11.5px;line-height:11.5px;color:#555;">12</div>
<div class="a" style="left:27.0px;top:443.8px;width:19.0px;height:11.0px;background:#fff;border:0.5px solid #d0d0d0"></div>
<div class="a t" style="right:1046.5px;top:472.7px;font-size:11.5px;line-height:11.5px;color:#555;">13</div>
<div class="a" style="left:27.0px;top:471.7px;width:19.0px;height:11.0px;background:#fff;border:0.5px solid #d0d0d0"></div>
<div class="a t" style="right:1046.5px;top:500.7px;font-size:11.5px;line-height:11.5px;color:#555;">14</div>
<div class="a" style="left:27.0px;top:499.7px;width:19.0px;height:11.0px;background:#fff;border:0.5px solid #d0d0d0"></div>
<div class="a t" style="right:1046.5px;top:529.0px;font-size:11.5px;line-height:11.5px;color:#555;">15</div>
<div class="a" style="left:27.0px;top:528.0px;width:19.0px;height:11.0px;background:#fff;border:0.5px solid #d0d0d0"></div>
<div class="a" style="left:28.0px;top:135.0px;width:17.0px;height:9.0px;background:linear-gradient(90deg,#2e2622,#6a5644 45%,#8a7763 55%,#221c19)"></div>
<div class="a" style="left:31.0px;top:138.0px;width:8.0px;height:3.0px;background:#cfc6b8;opacity:.7"></div>
<div class="a" style="left:29.0px;top:164.0px;width:3.0px;height:4.0px;background:#555"></div>
<div class="a" style="left:33.0px;top:164.0px;width:3.0px;height:4.0px;background:#666"></div>
<div class="a" style="left:37.0px;top:164.0px;width:3.0px;height:4.0px;background:#777"></div>
<div class="a" style="left:41.0px;top:165.0px;width:4.0px;height:2.0px;background:#e0a060"></div>
<div class="a" style="left:30.0px;top:192.0px;width:4.0px;height:3.0px;background:#8aa"></div>
<div class="a" style="left:37.0px;top:193.0px;width:6.0px;height:2.0px;background:#9ab"></div>
<div class="a" style="left:31.0px;top:198.0px;width:10.0px;height:1.0px;background:#aaa"></div>
<div class="a" style="left:22.8px;top:218.4px;width:26.2px;height:17.9px;border:2.5px solid #a53a2a;background:#fff"></div>
<div class="a" style="left:30.0px;top:224.0px;width:3.0px;height:4.0px;background:#c33"></div>
<div class="a" style="left:38.0px;top:224.0px;width:3.0px;height:4.0px;background:#844"></div>
<div class="a" style="left:29.0px;top:251.0px;width:6.0px;height:1.5px;background:#d66"></div>
<div class="a" style="left:35.0px;top:253.0px;width:8.0px;height:2.0px;background:#c44;opacity:.8"></div>
<div class="a" style="left:30.0px;top:281.0px;width:4.0px;height:1.5px;background:#999"></div>
<div class="a" style="left:36.0px;top:280.0px;width:6.0px;height:3.0px;background:#bbb"></div>
<div class="a" style="left:28.0px;top:306.0px;width:9.0px;height:8.0px;background:#6d6a60"></div>
<div class="a" style="left:40.0px;top:306.0px;width:5.0px;height:2.0px;background:#2b2a6a"></div>
<div class="a" style="left:29.0px;top:334.0px;width:5.0px;height:7.0px;background:#c96a5a;opacity:.8"></div>
<div class="a" style="left:40.0px;top:334.0px;width:5.0px;height:2.0px;background:#2b2a6a"></div>
<div class="a" style="left:28.0px;top:362.0px;width:9.0px;height:8.0px;background:#a87a40"></div>
<div class="a" style="left:40.0px;top:362.0px;width:5.0px;height:2.0px;background:#2b2a6a"></div>
<div class="a" style="left:28.0px;top:390.0px;width:7.0px;height:9.0px;background:#333"></div>
<div class="a" style="left:40.0px;top:390.0px;width:5.0px;height:2.0px;background:#2b2a6a"></div>
<div class="a" style="left:30.0px;top:419.0px;width:12.0px;height:4.0px;background:#2f4e8a;border-radius:6px 6px 0 0"></div>
<div class="a" style="left:28.0px;top:425.0px;width:17.0px;height:1.0px;background:#c33"></div>
<div class="a" style="left:28.0px;top:445.0px;width:17.0px;height:1.0px;background:#8a4a9a"></div>
<div class="a" style="left:32.0px;top:449.0px;width:6.0px;height:3.0px;background:#8ab"></div>
<div class="a" style="left:32.0px;top:476.0px;width:3.0px;height:4.0px;background:#2f6ab0"></div>
<div class="a" style="left:36.0px;top:474.0px;width:2.0px;height:6.0px;background:#2f6ab0"></div>
<div class="a" style="left:39.0px;top:477.0px;width:3.0px;height:3.0px;background:#2f6ab0"></div>
<div class="a" style="left:30.0px;top:502.0px;width:2.0px;height:5.0px;background:#3a8a3a"></div>
<div class="a" style="left:32.0px;top:502.0px;width:7.0px;height:1.0px;background:#3a8a3a"></div>
<div class="a" style="left:31.0px;top:529.0px;width:9.0px;height:9.0px;background:#c55;border-radius:2px"></div>
<svg class="a" style="left:39.0px;top:232.0px" width="24" height="32" viewBox="0 0 24 32"><path d="M2.5 2 L2.5 24 L8 19 L12.5 29 L17 27 L12.5 17.5 L19.5 17.5Z" fill="#f4b400" stroke="#1a1a1a" stroke-width="1.5" stroke-linejoin="round"/></svg>
<div class="a" style="left:1050.5px;top:122.0px;width:11.5px;height:425.0px;background:#e6e6e6"></div>
<div class="a" style="left:1051.5px;top:134.0px;width:10.5px;height:356.0px;background:#dcdcdc"></div>
<div class="a" style="left:1051.5px;top:125.0px;width:10.5px;height:9.0px;background:#fff"></div>
<svg class="a" style="left:1051.5px;top:124.5px" width="10" height="10" viewBox="0 0 10 10"><path d="M2 6.5 L5 3.5 L8 6.5Z" fill="#555"/></svg>
<div class="a" style="left:1051.5px;top:165.0px;width:10.5px;height:13.5px;background:#fff;border:1px solid #d0d0d0"></div>
<div class="a" style="left:1051.5px;top:490.0px;width:10.5px;height:11.0px;background:#fff"></div>
<svg class="a" style="left:1051.5px;top:490.5px" width="10" height="10" viewBox="0 0 10 10"><path d="M2 3.5 L5 6.5 L8 3.5Z" fill="#555"/></svg>
<svg class="a" style="left:1051.5px;top:503.0px" width="10" height="11" viewBox="0 0 10 11"><path d="M2 1.2 H8" stroke="#555" stroke-width="0.9"/><path d="M2 6 L5 2.5 L8 6Z M2 10 L5 6.5 L8 10Z" fill="#555"/></svg>
<svg class="a" style="left:1051.5px;top:516.0px" width="10" height="11" viewBox="0 0 10 11"><path d="M2 9.8 H8" stroke="#555" stroke-width="0.9"/><path d="M2 1 L5 4.5 L8 1Z M2 5 L5 8.5 L8 5Z" fill="#555"/></svg>
<div class="a" style="left:205.0px;top:130.0px;width:719.5px;height:405.0px;background:#fff;box-shadow:-1px 0 0 #b5b5b5, 1px 0 0 #c8c8c8, 0 1px 0 #d0d0d0"></div>
<div class="a" style="left:0.0px;top:546.0px;width:1062.0px;height:1.0px;background:#d6d6d6"></div>
<div class="a" style="left:0.0px;top:547.0px;width:1062.0px;height:17.0px;background:#f3f3f3"></div>
<div class="a t" style="left:4.5px;top:552.2px;font-size:8.9px;line-height:8.9px;color:#444;">Diapositive 4 de 35</div>
<svg class="a" style="left:95.0px;top:550.0px" width="14" height="12" viewBox="0 0 14 12"><rect x="1" y="1" width="7" height="9" fill="none" stroke="#666" stroke-width="0.8"/><path d="M3 4 H6 M3 6 H6" stroke="#888" stroke-width="0.6"/><path d="M9 4 L12 8 M12 4 L9 8" stroke="#666" stroke-width="0.9"/></svg>
<div class="a t" style="left:120.0px;top:552.4px;font-size:8.5px;line-height:8.5px;color:#444;">Français (France)</div>
<svg class="a" style="left:635.0px;top:550.0px" width="11" height="11" viewBox="0 0 11 11"><path d="M3.5 3 L5.5 1 L7.5 3" fill="none" stroke="#555" stroke-width="0.9"/><path d="M1 5.5 H10 M1 7.5 H10 M1 9.5 H8" stroke="#555" stroke-width="0.8"/></svg>
<div class="a t" style="left:647.5px;top:552.2px;font-size:8.8px;line-height:8.8px;color:#444;">Notes</div>
<svg class="a" style="left:686.0px;top:549.5px" width="13" height="12" viewBox="0 0 13 12"><path d="M1 1 H12 V8 H5 L2 11 V8 H1Z" fill="#555"/></svg>
<div class="a t" style="left:701.0px;top:552.2px;font-size:8.8px;line-height:8.8px;color:#444;">Commentaires</div>
<div class="a" style="left:774.0px;top:548.0px;width:28.2px;height:15.0px;background:#d4d4d4"></div>
<svg class="a" style="left:783.0px;top:550.0px" width="11" height="11" viewBox="0 0 11 11"><rect x="0.5" y="0.5" width="10" height="10" fill="none" stroke="#555" stroke-width="0.9"/><rect x="2" y="2" width="2.5" height="7" fill="none" stroke="#555" stroke-width="0.7"/></svg>
<svg class="a" style="left:814.0px;top:550.0px" width="11" height="11" viewBox="0 0 11 11"><rect x="0.5" y="0.5" width="4" height="4" fill="none" stroke="#666" stroke-width="0.8"/><rect x="6.5" y="0.5" width="4" height="4" fill="none" stroke="#666" stroke-width="0.8"/><rect x="0.5" y="6.5" width="4" height="4" fill="none" stroke="#666" stroke-width="0.8"/><rect x="6.5" y="6.5" width="4" height="4" fill="none" stroke="#666" stroke-width="0.8"/></svg>
<svg class="a" style="left:844.5px;top:550.0px" width="12" height="11" viewBox="0 0 12 11"><path d="M1 1 H5.5 L6 2 L6.5 1 H11 V10 H6.5 L6 11 L5.5 10 H1Z" fill="none" stroke="#666" stroke-width="0.8"/><path d="M6 2 V10" stroke="#666" stroke-width="0.6"/></svg>
<svg class="a" style="left:876.5px;top:550.0px" width="12" height="11" viewBox="0 0 12 11"><rect x="1" y="1" width="10" height="6" fill="none" stroke="#666" stroke-width="0.8"/><path d="M6 7 V10 M3 10.5 H9" stroke="#666" stroke-width="0.8"/></svg>
<div class="a" style="left:903.0px;top:555.3px;width:5.5px;height:1.0px;background:#555"></div>
<div class="a" style="left:913.0px;top:555.5px;width:78.0px;height:1.0px;background:#bdbdbd"></div>
<div class="a" style="left:951.0px;top:553.0px;width:1.0px;height:5.0px;background:#aaa"></div>
<div class="a" style="left:929.0px;top:551.5px;width:3.5px;height:8.0px;background:#555"></div>
<svg class="a" style="left:993.5px;top:551.0px" width="8" height="8" viewBox="0 0 8 8"><path d="M4 0.5 V7.5 M0.5 4 H7.5" stroke="#555" stroke-width="0.9"/></svg>
<div class="a t" style="left:1010.5px;top:552.2px;font-size:8.8px;line-height:8.8px;color:#444;">48 %</div>
<svg class="a" style="left:1039.5px;top:550.0px" width="11" height="11" viewBox="0 0 11 11"><rect x="0.5" y="0.5" width="10" height="10" fill="none" stroke="#666" stroke-width="0.8"/><path d="M2 2 L4 4 M9 2 L7 4 M2 9 L4 7 M9 9 L7 7" stroke="#777" stroke-width="0.8"/></svg>
<svg class="a" style="left:204px;top:130px" width="721" height="406" viewBox="803 245 721 406"><defs><filter id="blr"><feGaussianBlur stdDeviation="2"/></filter></defs><g opacity="0.10" filter="url(#blr)"><rect x="912" y="300" width="22" height="14" fill="#9a9a9a"/><rect x="993" y="299" width="57" height="14" rx="6" fill="#f0a27a"/><rect x="1090" y="300" width="44" height="10" fill="#8fd0c0"/><rect x="1372" y="300" width="28" height="14" fill="#9a9a9a"/><rect x="1455" y="299" width="60" height="14" rx="6" fill="#f0a27a"/><rect x="862" y="586" width="28" height="8" fill="#8fd0c0"/><rect x="937" y="588" width="32" height="8" fill="#8fd0c0"/><rect x="1213" y="586" width="30" height="10" fill="#8fd0c0"/><rect x="1398" y="588" width="30" height="8" fill="#8fd0c0"/></g><path d="M851 323 H1509 V581 H851" fill="none" stroke="#c9c9c9" stroke-width="2"/><path d="M1174.3 341 V570" stroke="#555" stroke-width="2"/><text x="887.5" y="356.7" font-family="Liberation Sans" font-weight="bold" font-size="19.6" fill="#2e2e2e" textLength="233.5" lengthAdjust="spacingAndGlyphs">THE WATERFALL PROCESS</text><text x="1253" y="356.6" font-family="Liberation Sans" font-weight="bold" font-size="19.6" fill="#2e2e2e" textLength="178.6" lengthAdjust="spacingAndGlyphs">THE AGILE PROCESS</text><path d="M970 389.6 H1031.5 L1061.4 449.2 L1031.5 508.8 H969 L939 449.2Z" fill="#e4202a"/><path d="M939.5 449.5 Q1000 466 1061 449.5" fill="none" stroke="#7a1010" stroke-width="1.3"/><path d="M851 510.2 H1163.5" stroke="#111" stroke-width="4.6"/><path d="M1122.4 385.4 L1132.8 380.2 L1135.4 422 L1130.2 423Z" fill="#111"/><path d="M1128 429.5 L1140 428.5 L1141.5 438.5 L1129.5 439.8Z" fill="#111"/><path d="M1061.4 449.4 L1124 463" stroke="#6a6a6a" stroke-width="1.1"/><g fill="#111"><ellipse cx="1115" cy="478" rx="14" ry="11" transform="rotate(-38 1115 478)"/><path d="M1102 481 L1111 490 L1088 504 L1088 509.5 L1074.5 509.5 L1076 504.5 L1083 501Z"/><path d="M1113 486 L1122 491 L1125 497 L1113 505 L1113 509.5 L1099.5 509.5 L1101 505 L1110 500 L1115 496Z"/><ellipse cx="1141" cy="463" rx="8" ry="10"/><path d="M1136 470 L1144 478 L1147 468Z"/><circle cx="1130" cy="469" r="7"/></g><circle cx="1142.6" cy="460.5" r="4.8" fill="#fff"/><circle cx="1139.6" cy="460.5" r="1" fill="#111"/><path d="M1133 454 L1110 449 M1134 452 L1116 443 M1136 450 L1122 437.5 M1138.5 449 L1130 436" stroke="#222" stroke-width="1.3"/><path d="M1124.5 468 Q1126 472 1124 477 M1127.5 467 Q1129 471 1127 476 M1130.5 466.5 Q1132 470 1130 475" stroke="#fff" stroke-width="1" fill="none"/><path d="M1123 484 Q1121 492 1120 495" stroke="#888" stroke-width="0.8" fill="none"/><g font-family="Liberation Sans" font-style="italic" font-weight="bold" font-size="19.5" fill="#616161"><text x="913.8" y="543.3" textLength="180" lengthAdjust="spacingAndGlyphs">‘This project has got so big,</text><text x="881" y="568.6" textLength="245" lengthAdjust="spacingAndGlyphs">I’m not sure I’ll be able to deliver it!’</text><text x="1228" y="541" textLength="227" lengthAdjust="spacingAndGlyphs">‘It’s so much better delivering this</text><text x="1241" y="566.5" textLength="200" lengthAdjust="spacingAndGlyphs">project in bite-sized sections’</text></g><path d="M1314.3 390.6 L1325.1 397.45 V411.15000000000003 L1314.3 418.0 L1303.5 411.15000000000003 V397.45ZM1337.8 390.6 L1348.6 397.45 V411.15000000000003 L1337.8 418.0 L1327.0 411.15000000000003 V397.45ZM1302.6 413.3 L1313.3999999999999 420.15 V433.85 L1302.6 440.7 L1291.8 433.85 V420.15ZM1326.1 413.3 L1336.8999999999999 420.15 V433.85 L1326.1 440.7 L1315.3 433.85 V420.15ZM1349.6 413.3 L1360.3999999999999 420.15 V433.85 L1349.6 440.7 L1338.8 433.85 V420.15ZM1373.1 413.3 L1383.8999999999999 420.15 V433.85 L1373.1 440.7 L1362.3 433.85 V420.15ZM1290.9 435.90000000000003 L1301.7 442.75 V456.45000000000005 L1290.9 463.3 L1280.1000000000001 456.45000000000005 V442.75ZM1314.4 435.90000000000003 L1325.2 442.75 V456.45000000000005 L1314.4 463.3 L1303.6000000000001 456.45000000000005 V442.75ZM1337.9 435.90000000000003 L1348.7 442.75 V456.45000000000005 L1337.9 463.3 L1327.1000000000001 456.45000000000005 V442.75ZM1361.4 435.90000000000003 L1372.2 442.75 V456.45000000000005 L1361.4 463.3 L1350.6000000000001 456.45000000000005 V442.75ZM1384.9 435.90000000000003 L1395.7 442.75 V456.45000000000005 L1384.9 463.3 L1374.1000000000001 456.45000000000005 V442.75ZM1302.6 458.5 L1313.3999999999999 465.34999999999997 V479.05 L1302.6 485.9 L1291.8 479.05 V465.34999999999997ZM1326.1 458.5 L1336.8999999999999 465.34999999999997 V479.05 L1326.1 485.9 L1315.3 479.05 V465.34999999999997ZM1349.6 458.5 L1360.3999999999999 465.34999999999997 V479.05 L1349.6 485.9 L1338.8 479.05 V465.34999999999997ZM1373.1 458.5 L1383.8999999999999 465.34999999999997 V479.05 L1373.1 485.9 L1362.3 479.05 V465.34999999999997ZM1314.3 481.1 L1325.1 487.95 V501.65000000000003 L1314.3 508.5 L1303.5 501.65000000000003 V487.95ZM1337.8 481.1 L1348.6 487.95 V501.65000000000003 L1337.8 508.5 L1327.0 501.65000000000003 V487.95ZM1361.3 481.1 L1372.1 487.95 V501.65000000000003 L1361.3 508.5 L1350.5 501.65000000000003 V487.95ZM1404 394.5 L1414 400.75 V413.25 L1404 419.5 L1394 413.25 V400.75Z" fill="#e4202a"/><path d="M1183.8 510 H1502" stroke="#111" stroke-width="4.6"/><g fill="#111"><ellipse cx="1431" cy="420" rx="10.5" ry="14"/><path d="M1426 432 H1436 V438 H1426Z"/><path d="M1422 412 L1417.5 417 L1422.5 421Z"/><path d="M1422 430 L1438 430 Q1441 450 1439 472 L1423 472 Q1420 450 1422 430Z"/><path d="M1423 466 L1411 502 L1406 504 L1406 509 L1420 509 L1424 502 L1431 476 L1432 466Z"/><path d="M1430 466 L1438 500 L1440 509 L1454 509 L1453 503 L1446 500 L1439 466Z"/><path d="M1426 436 L1404.5 420 L1402.5 423 L1424 442Z"/><path d="M1436 437 L1446 453 L1438 466 L1436 462 L1441 453 L1433 443Z"/></g><circle cx="1428.5" cy="415.5" r="3.5" fill="#fff"/><path d="M1422.5 427 Q1431 431.5 1439.5 424" stroke="#fff" stroke-width="1.3" fill="none"/><path d="M1431 404 Q1443 404 1444 424 M1434 402 Q1447 403 1447 421" stroke="#333" stroke-width="1.1" fill="none"/></svg>
</div>

<!-- bottom bar -->
<div class="a" style="left:491px;top:706px;width:120px;height:80px;border-radius:40px;background:#dc362e"></div>
<div class="a cb" style="left:624px;top:706px;width:60px;height:80px;border-radius:30px"></div>
<div class="a cb" style="left:697px;top:706px;width:93px;height:80px"></div>
<div class="a cb" style="left:803px;top:706px;width:92px;height:80px"></div>
<div class="a cb" style="left:909px;top:706px;width:93px;height:80px"></div>
<div class="a cb" style="left:1015px;top:706px;width:93px;height:80px"></div>
<div class="a" style="left:1122px;top:706px;width:146px;height:80px;border-radius:16px;background:#601410"></div>
<div class="a" style="left:1122px;top:706px;width:80px;height:80px;border-radius:16px;background:#f9dedc"></div>
<div class="a" style="left:1281px;top:706px;width:146px;height:80px;border-radius:16px;background:#601410"></div>
<div class="a" style="left:1281px;top:706px;width:80px;height:80px;border-radius:16px;background:#f9dedc"></div>
<!-- top bar content -->
<svg class="a" style="left:1653px;top:36px" width="39" height="39" viewBox="-1 -1 72 72">
<defs><clipPath id="cp1"><circle cx="35" cy="35" r="35"/></clipPath></defs>
<circle cx="35" cy="35" r="36" fill="#2a3038"/>
<g clip-path="url(#cp1)"><rect width="70" height="70" fill="#d6daf0"/>
<g filter="url(#bl1)">
<path d="M2 70 Q6 46 34 43 Q62 46 68 70Z" fill="#e6e9f8"/>
<ellipse cx="34" cy="24" rx="13" ry="17" fill="#c9977f"/>
<path d="M20 22 Q18 0 34 1 Q50 0 48 22 L47 14 Q41 9 34 10 Q26 10 21 15Z" fill="#1f1a1a"/>
<path d="M21 19 H32 V25 H21Z M36 19 H47 V25 H36Z" fill="none" stroke="#3a2c2a" stroke-width="1.8"/>
<path d="M28 36 Q34 40 40 36" stroke="#4a1f1a" stroke-width="3" fill="none"/>
</g></g></svg>
<div class="a" style="left:1000px;width:628px;top:40px;height:32px;line-height:32px;font-size:23px;color:#fff;white-space:nowrap;direction:rtl;text-align:right"><span style="font-weight:bold;font-size:23.3px">aimen bouzana</span>&nbsp;<span style="font-size:19px">(مشاركة العرض)</span></div>
<svg class="a" style="left:1756px;top:35px" width="40" height="40" viewBox="0 0 40 40" fill="#1f1f23"><rect x="5.1" y="31.9" width="30.2" height="3.1"/><rect x="8.5" y="4.9" width="3.8" height="27.6"/><rect x="8.5" y="4.9" width="16" height="3.6"/><rect x="20.7" y="4.9" width="3.8" height="27.6"/><rect x="20.7" y="7.2" width="11.2" height="3.6"/><rect x="28.2" y="7.2" width="3.7" height="25.3"/><rect x="17" y="18.6" width="3" height="3"/></svg>
<svg class="a" style="left:1840px;top:35px" width="45" height="40" viewBox="0 0 45 40"><path d="M16.4 8.2 H22.8 V13.4 H36.65 V28" fill="none" stroke="#1f1f23" stroke-width="2.2"/><rect x="29.8" y="18.4" width="2.5" height="2.3" fill="#1f1f23"/><path d="M7.5 5.5 L38.5 35.5" stroke="#fcbd0b" stroke-width="4.6"/><path d="M9.2 7.2 L36.8 33.8" stroke="#1f1f23" stroke-width="2.5" stroke-linecap="square"/><path d="M10.2 10.6 V31.3 H31.3Z" fill="#1f1f23"/><g fill="#fcbd0b"><rect x="13.2" y="20.9" width="2.7" height="2.4"/><rect x="13.2" y="26.3" width="2.7" height="2.4"/><rect x="18.6" y="26.3" width="2.7" height="2.4"/><rect x="13.2" y="15.2" width="2.7" height="2.4"/><rect x="18.6" y="20.9" width="2.7" height="2.4"/><rect x="24" y="26.3" width="2.7" height="2.4"/></g></svg>

<!-- tile1 content -->
<div class="a" style="left:36px;top:128px;width:40px;height:40px;border-radius:50%;background:#0a3d37"></div>
<svg class="a" style="left:43px;top:134px" width="26" height="26" viewBox="0 0 24 24"><path fill="#5ed3bd" d="M19 11h-1.7c0 .74-.16 1.43-.43 2.05l1.23 1.23c.56-.98.9-2.09.9-3.28zm-4.02.17c0-.06.02-.11.02-.17V5c0-1.66-1.34-3-3-3S9 3.34 9 5v.18l5.98 5.99zM4.27 3L3 4.27l6.01 6.01V11c0 1.66 1.33 3 2.99 3 .22 0 .44-.03.65-.08l1.66 1.66c-.71.33-1.5.52-2.31.52-2.76 0-5.3-2.1-5.3-5.1H5c0 3.41 2.72 6.23 6 6.72V21h2v-3.28c.91-.13 1.77-.45 2.54-.9L19.73 21 21 19.73 4.27 3z"/></svg>
<div class="a" style="left:141px;top:164px;width:80px;height:80px;border-radius:50%;background:#0c8a7e"></div>
<div class="a" style="left:141px;top:164px;width:80px;height:80px;line-height:80px;text-align:center;color:#fff;font-size:43px">K</div>
<div class="a" style="left:150px;width:172px;top:253px;height:26px;line-height:26px;text-align:right;color:#fff;font-size:20px;font-weight:bold;white-space:nowrap;letter-spacing:-0.2px">Khathir Chine</div>

<!-- tile2 content -->
<svg class="a" style="left:114px;top:349px" width="70" height="70" viewBox="0 0 70 70">
<defs><clipPath id="cp2"><circle cx="34.5" cy="35" r="33.5"/></clipPath><filter id="bl1"><feGaussianBlur stdDeviation="0.9"/></filter></defs>
<circle cx="34.5" cy="35" r="34.3" fill="#2a2f3a"/>
<g clip-path="url(#cp2)"><rect width="70" height="70" fill="#d9dcee"/>
<g filter="url(#bl1)">
<path d="M0 70 Q4 44 33 41 Q62 44 68 70Z" fill="#e9ebf6"/>
<path d="M26 38 L33 47 L40 38 Z" fill="#d8b8b0"/>
<ellipse cx="33" cy="24" rx="12.5" ry="16" fill="#c7957f"/>
<path d="M20 22 Q18 1 33 2 Q48 1 46 22 L45 14 Q40 9 33 10 Q25 10 21 15Z" fill="#1f1a1a"/>
<path d="M21 19.5 H31.5 V25.5 H21Z M34.5 19.5 H45 V25.5 H34.5Z" fill="none" stroke="#3a2c2a" stroke-width="1.5"/>
<path d="M27 35 Q33 39 39 35" stroke="#4a1f1a" stroke-width="2.6" fill="none"/>
</g></g></svg>
<div class="a" style="left:178px;top:351px;width:66px;height:66px;border-radius:50%;background:#353537"></div>
<div class="a" style="left:180px;top:353px;width:62px;height:62px;border-radius:50%;background:#e8386f"></div>
<div class="a" style="left:180px;top:353px;width:62px;height:62px;line-height:62px;text-align:center;color:#fff;font-size:34px">S</div>
<div class="a" style="left:60px;width:244px;top:428px;height:24px;line-height:24px;text-align:center;color:#fff;font-size:18px;white-space:nowrap;direction:rtl"><b style="font-size:18.5px">46</b> <span style="font-size:15.5px">مستخدمًا آخر</span></div>

<!-- bottom left icons -->
<svg class="a" style="left:40px;top:726px" width="40" height="40" viewBox="0 0 40 40" fill="#fff"><circle cx="9" cy="9" r="3.8"/><circle cx="19" cy="9" r="3.8"/><circle cx="28.8" cy="9" r="3.8"/><circle cx="9" cy="19" r="3.8"/><circle cx="19" cy="19" r="3.8"/><circle cx="28.8" cy="19" r="3.8"/><circle cx="9" cy="29" r="3.8"/><circle cx="19" cy="29" r="3.8"/><circle cx="28.8" cy="29" r="3.8"/></svg>
<svg class="a" style="left:115px;top:715px" width="50" height="50" viewBox="0 0 50 50"><path d="M8.8 14.8 H39.2 V38.2 H8.8 Z" fill="none" stroke="#fff" stroke-width="3.6" stroke-linejoin="round"/><path d="M7 37 V46.7 L14 39.9 Z" fill="#fff"/><rect x="14" y="22" width="20.5" height="2.9" fill="#fff"/><rect x="14" y="26.9" width="20.5" height="2.9" fill="#fff"/><rect x="14" y="31.9" width="13.5" height="2.9" fill="#fff"/><circle cx="11.4" cy="6" r="8.3" fill="#141416"/><circle cx="11.4" cy="6" r="6.6" fill="#8ab4f8"/></svg>
<div class="a" style="left:172px;top:691px;width:47px;height:34px;border-radius:17px;background:#5f6368;color:#fff;font-weight:bold;font-size:19px;line-height:34px;text-align:center">48</div>
<svg class="a" style="left:195px;top:725px" width="46" height="40" viewBox="0 0 46 40" fill="#fff"><circle cx="18.1" cy="13.2" r="5.05" fill="none" stroke="#fff" stroke-width="4.3"/><path d="M6.1 31.7 V29.5 C6.1 25 12 23.8 18.1 23.8 C24.2 23.8 30.1 25 30.1 29.5 V31.7Z" fill="none" stroke="#fff" stroke-width="4" stroke-linejoin="round"/><path d="M25.3 6.4 A7.28 7.28 0 1 1 25.3 20 A14.4 14.4 0 0 0 25.3 6.4Z"/><path d="M32.8 22.8 Q42 24 42 29.5 V33.7 H35.5 V30 Q35.5 25.5 32.8 22.8Z"/></svg>
<svg class="a" style="left:276px;top:723px" width="44" height="44" viewBox="0 0 44 44"><circle cx="22" cy="22" r="15.6" fill="none" stroke="#fff" stroke-width="3.3"/><circle cx="22" cy="15.5" r="2.2" fill="#fff"/><rect x="20.3" y="18.8" width="3.4" height="12.2" fill="#fff"/></svg>

<!-- control icons -->
<svg class="a" style="left:531px;top:729px" width="40" height="30" viewBox="0 0 40 30"><path d="M1.8 17 L6.6 23.4 L14.2 19.3 V14 Q20 12.5 25.8 14 V19.3 L33 23.4 L37.7 17 Q20 2.2 1.8 17Z" fill="#fff" stroke="#fff" stroke-width="0.6" stroke-linejoin="round"/><path d="M7.3 17.8 L10 15.6 M29.6 15.6 L32.3 17.8" stroke="#b8322c" stroke-width="1.3"/></svg>
<svg class="a" style="left:644px;top:725px" width="20" height="40" viewBox="0 0 20 40" fill="#e3e3e3"><circle cx="10" cy="11" r="3.4"/><circle cx="10" cy="20" r="3.4"/><circle cx="10" cy="29.3" r="3.4"/></svg>
<svg class="a" style="left:715px;top:715px" width="60" height="60" viewBox="0 0 60 60"><path d="M28.3 11.6 V29.8 M34.9 13.1 V29.8" stroke="#e3e3e3" stroke-width="3.8"/><path d="M42 17 V36 C42 43 36.5 47.8 29.8 47.8 C23 47.8 19.5 43.5 17 40 L11.6 30.4 L13.8 29.2 L22 37.2 V15.2" fill="none" stroke="#e3e3e3" stroke-width="3.8" stroke-linejoin="round"/><rect x="26.4" y="11.5" width="3.8" height="1.5" rx="1.5" fill="#e3e3e3"/></svg>
<svg class="a" style="left:829px;top:726px" width="40" height="40" viewBox="0 0 40 40"><rect x="7.1" y="7.4" width="26.6" height="23.2" rx="2.2" fill="none" stroke="#e3e3e3" stroke-width="4"/><path d="M19.4 15.6 H11.6 V22.4 H19.4 M31.4 15.6 H23.4 V22.4 H31.4" fill="none" stroke="#e3e3e3" stroke-width="3.1"/></svg>
<svg class="a" style="left:935px;top:725px" width="40" height="40" viewBox="0 0 40 40"><circle cx="20.3" cy="20" r="15.8" fill="none" stroke="#e3e3e3" stroke-width="3.2"/><circle cx="14.5" cy="15.5" r="2.6" fill="#e3e3e3"/><circle cx="26.3" cy="15.5" r="2.6" fill="#e3e3e3"/><path d="M11.7 23.3 H29 Q28 29.7 20.3 29.7 Q12.7 29.7 11.7 23.3Z" fill="#e3e3e3"/></svg>
<svg class="a" style="left:1040px;top:726px" width="44" height="38" viewBox="0 0 44 38"><rect x="6" y="5.5" width="31" height="22.5" rx="2.5" fill="none" stroke="#e3e3e3" stroke-width="3"/><rect x="2.6" y="30.6" width="37.5" height="3" fill="#e3e3e3"/><path d="M21.6 10 L28 16.5 H23.8 V23 H19.4 V16.5 H15.2Z" fill="#e3e3e3"/></svg>
<svg class="a" style="left:1141px;top:726.8px" width="41.5" height="41.5" viewBox="0 0 24 24"><path fill="#601410" d="M9.56 8l-2-2-4.15-4.14L2 3.27 4.73 6H4c-.55 0-1 .45-1 1v10c0 .55.45 1 1 1h12c.21 0 .39-.08.55-.18L19.73 21l1.41-1.41-8.86-8.86L9.56 8zM5 16V8h1.73l8 8H5zm10-8v2.61l6 6V6.5l-4 4V7c0-.55-.45-1-1-1h-5.61l2 2H15z"/></svg>
<svg class="a" style="left:1219px;top:736px" width="22" height="18" viewBox="0 0 22 18"><path d="M3.5 13.5 L11 6 L18.5 13.5" fill="none" stroke="#f9dedc" stroke-width="3.2"/></svg>
<svg class="a" style="left:1299.5px;top:726.4px" width="40.3" height="40.3" viewBox="0 0 24 24"><path fill="#601410" d="M10.8 4.9c0-.66.54-1.2 1.2-1.2s1.2.54 1.2 1.2l-.01 3.91L15 10.6V5c0-1.66-1.34-3-3-3-1.540 0-2.79 1.16-2.96 2.65l1.76 1.76V4.9zM19 11h-1.7c0 .58-.1 1.130-.27 1.64l1.27 1.27c.44-.88.7-1.870.7-2.91zM4.41 2.86L3 4.27l6 6V11c0 1.66 1.34 3 3 3 .23 0 .44-.03.65-.08l1.66 1.66c-.71.33-1.5.52-2.31.52-2.76 0-5.3-2.1-5.3-5.1H5c0 3.41 2.72 6.23 6 6.72V21h2v-3.280c.91-.13 1.77-.45 2.55-.9l4.2 4.2 1.41-1.41L4.41 2.86z"/></svg>
<svg class="a" style="left:1378px;top:736px" width="22" height="18" viewBox="0 0 22 18"><path d="M3.5 13.5 L11 6 L18.5 13.5" fill="none" stroke="#f9dedc" stroke-width="3.2"/></svg>

<!-- right info -->
<div class="a" style="left:1789px;top:732px;width:1.3px;height:27px;background:#80868b"></div>
<div class="a" style="left:1600px;width:278px;top:729px;height:32px;line-height:32px;text-align:right;color:#fff;font-size:25px;font-weight:bold;white-space:nowrap">8:32</div>
<div class="a" style="left:1800px;width:22px;top:729px;height:32px;line-height:32px;text-align:right;color:#fff;font-size:20px;white-space:nowrap">م</div>
<div class="a" style="left:1400px;width:370px;top:729px;height:32px;line-height:32px;text-align:right;color:#fff;font-size:21px;white-space:nowrap;direction:rtl">الأسبوع العالمي للمقاولاتية <b style="font-size:25px">2025</b></div>

</body></html>
